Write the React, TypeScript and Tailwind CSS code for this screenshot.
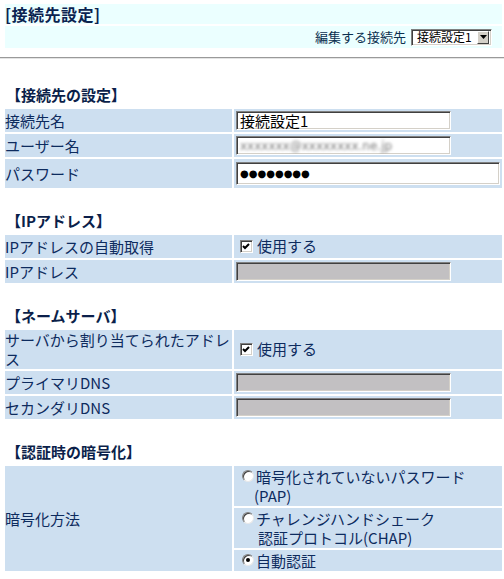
import React from 'react';

const font = "font-['Noto_Sans_CJK_JP','Noto_Sans',sans-serif]";

// classic sunken 3D border used by inputs
const sunken =
  'border border-t-[#808080] border-l-[#808080] border-r-white border-b-white shadow-[inset_1px_1px_0_#404040,inset_-1px_-1px_0_#d4d0c8]';

const TextBox = ({ value, width = 'w-[215px]', disabled = false }: { value?: string; width?: string; disabled?: boolean }) => (
  <div className={`${sunken} ${width} h-[19px] flex items-center px-[3px] text-[15px] leading-none text-black ${disabled ? 'bg-[#c2c0c2]' : 'bg-white'}`}>
    {value}
  </div>
);

const CheckBox = () => (
  <span className={`${sunken} inline-flex w-[13px] h-[13px] bg-white shrink-0`}>
    <svg width="11" height="11" viewBox="0 0 11 11">
      <polyline points="2,5 4,7 8,3" fill="none" stroke="black" strokeWidth="2" />
    </svg>
  </span>
);

const Radio = ({ checked = false }: { checked?: boolean }) => (
  <span className="inline-flex w-[12px] h-[12px] rounded-full border border-t-[#808080] border-l-[#808080] border-r-[#e8e8e8] border-b-[#e8e8e8] bg-white shadow-[inset_1px_1px_0_#404040] items-center justify-center shrink-0">
    {checked && <span className="w-[4px] h-[4px] rounded-full bg-black" />}
  </span>
);

const Heading = ({ children, first = false }: { children: React.ReactNode; first?: boolean }) => (
  <div className={`${first ? 'mt-[25px]' : 'mt-[20px]'} h-[23px] flex items-center pl-[1px] text-[15px] font-bold text-[#0b1f4a]`}>
    {children}
  </div>
);

const Label = ({ children }: { children: React.ReactNode }) => (
  <td className="w-[227px] bg-[#cddff0] p-0 align-middle text-[15px] leading-[19px] text-[#0d2b5e]">{children}</td>
);

const tableCls = 'w-[calc(100%+2px)] -ml-[2px] border-separate border-spacing-[2px]';

export default function App() {
  return (
    <div className={`min-h-screen bg-white pl-[5px] pt-[2px] overflow-hidden ${font}`}>
      {/* title block */}
      <table className={tableCls}>
        <tbody>
          <tr className="h-[20px]">
            <td className="bg-[#ebffff] p-0 text-[16px] font-bold leading-none text-[#0b2350] tracking-[0.5px]">[接続先設定]</td>
          </tr>
          <tr className="h-[22px]">
            <td className="bg-[#ebffff] p-0 pr-[10px]">
              <div className="flex items-center justify-end gap-[5px] text-[13px] text-[#0b3050]">
                <span>編集する接続先</span>
                <div className="w-[81px] h-[17px] flex items-center justify-between bg-white border border-t-[#808080] border-l-[#808080] border-r-white border-b-white shadow-[inset_1px_1px_0_#404040,inset_-1px_-1px_0_#d4d0c8] pl-[5px] pr-[2px]">
                  <span className="text-[12px] text-black leading-none">接続設定1</span>
                  <span className="w-[12px] h-[13px] shrink-0 bg-[#d4d0c8] border border-t-white border-l-white border-r-[#404040] border-b-[#404040] flex items-center justify-center">
                    <svg width="7" height="4" viewBox="0 0 7 4">
                      <polygon points="0,0 7,0 3.5,4" fill="black" />
                    </svg>
                  </span>
                </div>
              </div>
            </td>
          </tr>
        </tbody>
      </table>

      <div className="-ml-[5px] mt-[7px] border-t border-t-[#9a9a9a] border-b border-b-[#e4e4e4]" />

      {/* connection */}
      <Heading first>【接続先の設定】</Heading>
      <table className={tableCls}>
        <tbody>
          <tr className="h-[23px]">
            <Label>接続先名</Label>
            <td className="bg-[#cddff0] p-0 pl-[2px]">
              <TextBox value="接続設定1" />
            </td>
          </tr>
          <tr className="h-[23px]">
            <Label>ユーザー名</Label>
            <td className="bg-[#cddff0] p-0 pl-[2px]">
              <div className={`${sunken} w-[215px] h-[19px] bg-white flex items-center px-[3px] overflow-hidden`}>
                <span className="text-[12px] leading-none text-[#7a7a7a] blur-[1.4px] font-['DejaVu_Sans',sans-serif]">xxxxxxx@xxxxxxxx.ne.jp</span>
              </div>
            </td>
          </tr>
          <tr className="h-[29px]">
            <Label>パスワード</Label>
            <td className="bg-[#cddff0] p-0 pl-[2px]">
              <div className={`${sunken} w-[264px] h-[23px] bg-white flex items-center px-[3px] text-[10px] leading-none text-black font-['DejaVu_Sans',sans-serif]`}>
                ●●●●●●●●
              </div>
            </td>
          </tr>
        </tbody>
      </table>

      {/* ip */}
      <Heading>【IPアドレス】</Heading>
      <table className={tableCls}>
        <tbody>
          <tr className="h-[22px]">
            <Label>IPアドレスの自動取得</Label>
            <td className="bg-[#cddff0] p-0 pl-[6px]">
              <div className="flex items-center gap-[4px] text-[15px] text-[#0d2b5e]">
                <CheckBox />
                <span>使用する</span>
              </div>
            </td>
          </tr>
          <tr className="h-[23px]">
            <Label>IPアドレス</Label>
            <td className="bg-[#cddff0] p-0 pl-[2px]">
              <TextBox disabled />
            </td>
          </tr>
        </tbody>
      </table>

      {/* dns */}
      <Heading>【ネームサーバ】</Heading>
      <table className={tableCls}>
        <tbody>
          <tr className="h-[39px]">
            <Label>
              サーバから割り当てられたアドレ
              <br />ス
            </Label>
            <td className="bg-[#cddff0] p-0 pl-[6px]">
              <div className="flex items-center gap-[4px] text-[15px] text-[#0d2b5e]">
                <CheckBox />
                <span>使用する</span>
              </div>
            </td>
          </tr>
          <tr className="h-[23px]">
            <Label>プライマリDNS</Label>
            <td className="bg-[#cddff0] p-0 pl-[2px]">
              <TextBox disabled />
            </td>
          </tr>
          <tr className="h-[23px]">
            <Label>セカンダリDNS</Label>
            <td className="bg-[#cddff0] p-0 pl-[2px]">
              <TextBox disabled />
            </td>
          </tr>
        </tbody>
      </table>

      {/* auth */}
      <Heading>【認証時の暗号化】</Heading>
      <table className={tableCls}>
        <tbody>
          <tr className="h-[40px]">
            <td rowSpan={3} className="w-[227px] bg-[#cddff0] p-0 align-middle text-[15px] leading-[19px] text-[#0d2b5e]">
              暗号化方法
            </td>
            <td className="bg-[#cddff0] p-0 pl-[8px] text-[15px] leading-[19px] text-[#0d2b5e]">
              <div className="flex items-center gap-[2px]">
                <Radio />
                <span>暗号化されていないパスワード</span>
              </div>
              <div className="pl-[12px]">(PAP)</div>
            </td>
          </tr>
          <tr className="h-[40px]">
            <td className="bg-[#cddff0] p-0 pl-[8px] text-[15px] leading-[19px] text-[#0d2b5e]">
              <div className="flex items-center gap-[2px]">
                <Radio />
                <span>チャレンジハンドシェーク</span>
              </div>
              <div className="pl-[16px]">認証プロトコル(CHAP)</div>
            </td>
          </tr>
          <tr className="h-[21px]">
            <td className="bg-[#cddff0] p-0 pl-[8px] text-[15px] leading-[19px] text-[#0d2b5e]">
              <div className="flex items-center gap-[2px]">
                <Radio checked />
                <span>自動認証</span>
              </div>
            </td>
          </tr>
        </tbody>
      </table>
    </div>
  );
}
